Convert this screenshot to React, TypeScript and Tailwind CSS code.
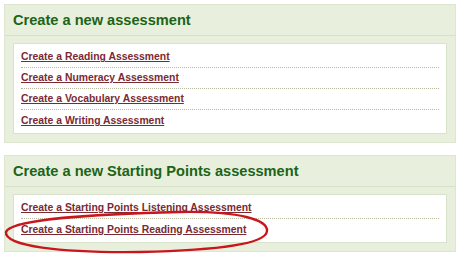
import React from "react";

const font = { fontFamily: '"Liberation Sans", Arial, sans-serif' };

function Panel({ title, links }: { title: string; links: string[] }) {
  return (
    <div className="w-[452px] border border-[#dde7d0] bg-[#e8f0dd]">
      <div className="flex h-[31px] items-center border-b border-[#d6e2c6] pl-[8px]">
        <h2 className="text-[14.6px] font-bold leading-none text-[#1c6418]">{title}</h2>
      </div>
      <div className="px-[8px] pt-[7px] pb-[8px]">
        <div className="border border-[#d9e3cc] bg-white px-[7px] pt-[3px] pb-[2px]">
          {links.map((l, i) => (
            <div
              key={l}
              className={
                "flex h-[21px] items-center pt-[1px] " +
                (i < links.length - 1 ? "border-b border-dotted border-[#b8b8a0]" : "")
              }
            >
              <a href="#" className="text-[10.4px] font-bold leading-none text-[#7a2a33] underline">
                {l}
              </a>
            </div>
          ))}
        </div>
      </div>
    </div>
  );
}

export default function App() {
  return (
    <div className="relative h-[258px] w-[462px] bg-white" style={font}>
      <div className="flex flex-col gap-[12px] pl-[4px] pt-[4px]">
        <Panel
          title="Create a new assessment"
          links={[
            "Create a Reading Assessment",
            "Create a Numeracy Assessment",
            "Create a Vocabulary Assessment",
            "Create a Writing Assessment",
          ]}
        />
        <Panel
          title="Create a new Starting Points assessment"
          links={[
            "Create a Starting Points Listening Assessment",
            "Create a Starting Points Reading Assessment",
          ]}
        />
      </div>
      <svg className="pointer-events-none absolute left-0 top-0" width="462" height="258">
        <path
          d="M 6 232 C 10 220, 90 214, 180 212 C 240 211, 268 220, 267 231 C 266 244, 220 250, 140 252 C 60 253, 4 246, 6 232 Z"
          fill="none"
          stroke="#c8161c"
          strokeWidth="2.4"
        />
      </svg>
    </div>
  );
}
